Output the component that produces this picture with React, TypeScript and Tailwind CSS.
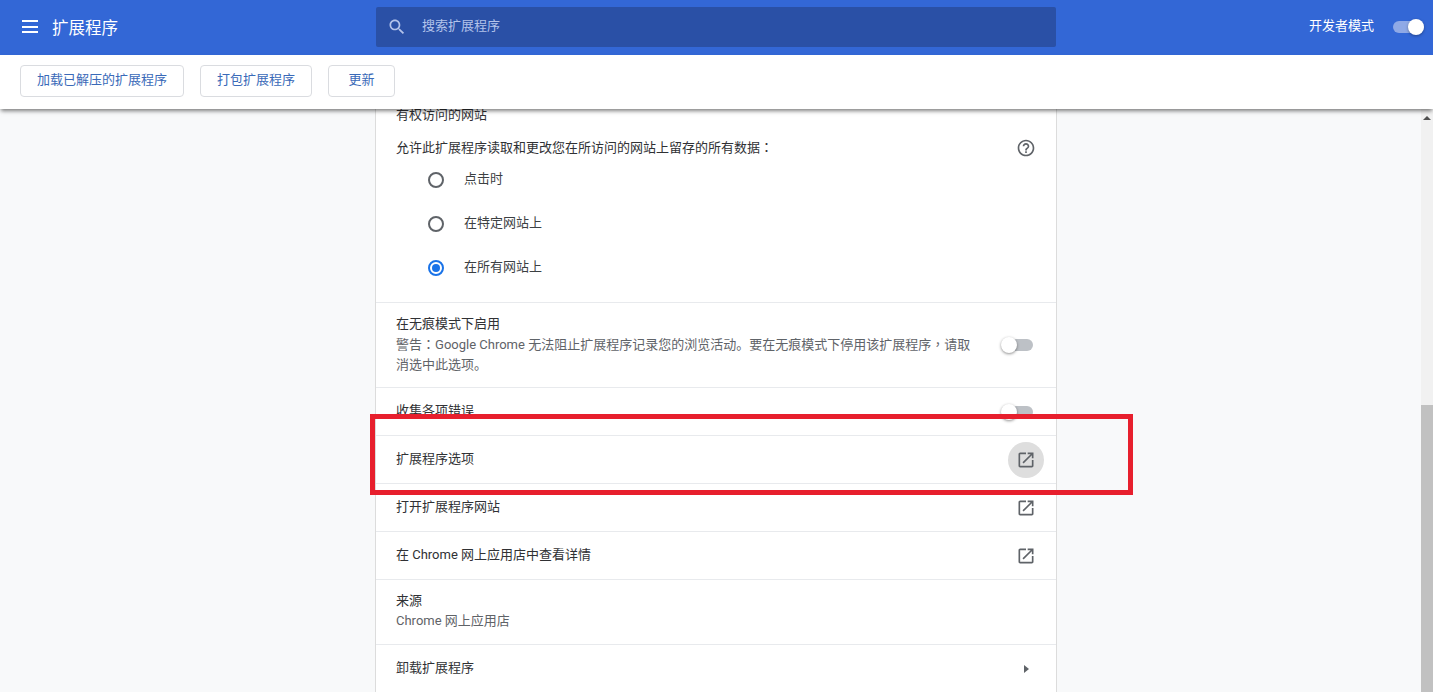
import React from 'react'

const OPEN_PATH = "M19 19H5V5h7V3H5c-1.11 0-2 .9-2 2v14c0 1.1.89 2 2 2h14c1.1 0 2-.9 2-2v-7h-2v7zM14 3v2h3.59l-9.83 9.83 1.41 1.41L19 6.41V10h2V3h-7z";
const HELP_PATH = "M11 18h2v-2h-2v2zm1-16C6.48 2 2 6.48 2 12s4.48 10 10 10 10-4.48 10-10S17.52 2 12 2zm0 18c-4.41 0-8-3.59-8-8s3.59-8 8-8 8 3.59 8 8-3.59 8-8 8zm0-14c-2.21 0-4 1.79-4 4h2c0-1.1.9-2 2-2s2 .9 2 2c0 2-3 1.75-3 5h2c0-2.25 3-2.5 3-5 0-2.21-1.79-4-4-4z";
const SEARCH_PATH = "M15.5 14h-.79l-.28-.27C15.41 12.59 16 11.11 16 9.5 16 5.91 13.09 3 9.5 3S3 5.91 3 9.5 5.91 16 9.5 16c1.61 0 3.09-.59 4.23-1.57l.27.28v.79l5 4.99L20.49 19l-4.99-5zm-6 0C7.01 14 5 11.99 5 9.5S7.01 5 9.5 5 14 7.01 14 9.5 11.99 14 9.5 14z";

const Icon: React.FC<{ d: string; size?: number; className?: string }> = ({ d, size = 20, className }) => (
  <svg width={size} height={size} viewBox="0 0 24 24" fill="currentColor" className={className}>
    <path d={d} />
  </svg>
);

// centred full-width punctuation, as the reference's system font draws it
const Punct: React.FC<{ children: string }> = ({ children }) => (
  <span style={{ fontFamily: '"Noto Sans CJK TC", sans-serif' }}>{children}</span>
);

const Toggle: React.FC = () => (
  <div className="relative w-[31px] h-[12px] rounded-full bg-[#bdc1c6]">
    <div className="absolute -left-[1px] -top-[2px] w-4 h-4 rounded-full bg-white shadow-[0_1px_3px_rgba(0,0,0,0.45)]" />
  </div>
);

const Radio: React.FC<{ label: string; checked?: boolean; className: string }> = ({ label, checked, className }) => (
  <div className={`${className} flex items-center pl-[52px]`}>
    <div className={`w-4 h-4 rounded-full border-2 flex items-center justify-center ${checked ? 'border-[#1a73e8]' : 'border-[#5f6368]'}`}>
      {checked && <div className="w-2 h-2 rounded-full bg-[#1a73e8]" />}
    </div>
    <span className="ml-5 pb-[2px] text-[#3c4043]">{label}</span>
  </div>
);

const LinkRow: React.FC<{ label: string; active?: boolean }> = ({ label, active }) => (
  <div className="h-[48px] flex items-center justify-between pl-5 pr-3 border-b border-[#e8eaed]">
    <span className="pb-[2px]">{label}</span>
    <div className={`w-9 h-9 rounded-full flex items-center justify-center text-[#5f6368] ${active ? 'bg-[#dedede]' : ''}`}>
      <Icon d={OPEN_PATH} />
    </div>
  </div>
);

export default function App() {
  return (
    <div
      className="relative h-screen overflow-hidden flex flex-col bg-[#f8f9fa] text-[13px] leading-5 text-[#303134]"
      style={{ fontFamily: 'Roboto, "Noto Sans CJK SC", sans-serif' }}
    >
      {/* header */}
      <div className="h-[55px] shrink-0 grid grid-cols-[376px_680px_1fr] bg-[#3367d6] text-white">
        <div className="flex items-center pl-[22px]">
          <div className="w-4 flex flex-col gap-[3.5px] mb-[2px]">
            <div className="h-[2px] bg-white" />
            <div className="h-[2px] bg-white" />
            <div className="h-[2px] bg-white" />
          </div>
          <span className="ml-[14px] text-[16.5px] mt-[2px]">扩展程序</span>
        </div>
        <div className="mt-[7px] h-[40px] rounded-[2px] bg-[#2a50a6] flex items-center pl-[11px] text-[#b3c3ea]">
          <Icon d={SEARCH_PATH} size={20} />
          <span className="ml-[15px] pb-[2px]">搜索扩展程序</span>
        </div>
        <div className="flex items-start justify-end pt-[16px] pr-[9px]">
          <span>开发者模式</span>
          <div className="relative ml-[19px] mt-[5px] w-[31px] h-[12px] rounded-full bg-[#8fa9e6]">
            <div className="absolute right-0 -top-[2px] w-4 h-4 rounded-full bg-white shadow-[0_1px_3px_rgba(0,0,0,0.35)]" />
          </div>
        </div>
      </div>

      {/* toolbar */}
      <div className="relative z-10 h-[54px] shrink-0 bg-white flex items-start gap-4 pt-[10px] pl-5 shadow-[0_3px_4px_-1px_rgba(0,0,0,0.5)] text-[#3a6ab8]">
        <button className="h-8 px-4 pb-[2px] rounded-[4px] border border-[#dadce0] bg-white">加载已解压的扩展程序</button>
        <button className="h-8 px-4 pb-[2px] rounded-[4px] border border-[#dadce0] bg-white">打包扩展程序</button>
        <button className="h-8 px-[19.5px] pb-[2px] rounded-[4px] border border-[#dadce0] bg-white">更新</button>
      </div>

      {/* body */}
      <div className="flex-1 min-h-0 grid grid-cols-[375px_682px_1fr]">
        <div />
        <div className="bg-white border-x border-[#dcdcdc] -mt-[4px] h-[700px]">
          <div className="border-b border-[#e8eaed] pb-3">
            <div className="pl-5">有权访问的网站</div>
            <div className="mt-3 h-5 pl-5 pr-3 flex items-start justify-between">
              <span>允许此扩展程序读取和更改您在所访问的网站上留存的所有数据<Punct>：</Punct></span>
              <div className="w-9 flex justify-center text-[#5f6368] pt-[1px]">
                <Icon d={HELP_PATH} />
              </div>
            </div>
            <div className="mt-[1px]">
              <Radio label="点击时" className="h-[44px]" />
              <Radio label="在特定网站上" className="h-[43px]" />
              <Radio label="在所有网站上" checked className="h-[45px]" />
            </div>
          </div>

          <div className="h-[85px] flex items-center justify-between pl-5 pr-[23px] border-b border-[#e8eaed]">
            <div className="whitespace-nowrap pb-[2px]">
              <div>在无痕模式下启用</div>
              <div className="text-[#5f6368]">
                警告<Punct>：</Punct>Google Chrome 无法阻止扩展程序记录您的浏览活动。要在无痕模式下停用该扩展程序<Punct>，</Punct>请取
                <br />
                消选中此选项。
              </div>
            </div>
            <Toggle />
          </div>

          <div className="h-[48px] flex items-center justify-between pl-5 pr-[23px] border-b border-[#e8eaed]">
            <span className="pb-[2px]">收集各项错误</span>
            <Toggle />
          </div>

          <LinkRow label="扩展程序选项" active />
          <LinkRow label="打开扩展程序网站" />
          <LinkRow label="在 Chrome 网上应用店中查看详情" />

          <div className="h-[65px] flex flex-col justify-center pl-5 pb-[2px] border-b border-[#e8eaed]">
            <div>来源</div>
            <div className="text-[#5f6368]">Chrome 网上应用店</div>
          </div>

          <div className="h-[48px] flex items-center justify-between pl-5 pr-3">
            <span className="pb-[2px]">卸载扩展程序</span>
            <div className="w-9 flex justify-center">
              <div className="w-0 h-0 border-y-[4px] border-y-transparent border-l-[5px] border-l-[#5f6368]" />
            </div>
          </div>
        </div>

        {/* scrollbar */}
        <div className="flex justify-end">
          <div className="w-3 h-full bg-[#f1f1f1] flex flex-col">
            <div className="h-[296px] flex justify-center pt-[7px]">
              <div className="w-0 h-0 border-x-[4px] border-x-transparent border-b-[4px] border-b-[#505050]" />
            </div>
            <div className="flex-1 bg-[#c1c1c1]" />
          </div>
        </div>
      </div>

      {/* red annotation box */}
      <div className="absolute z-20 left-[370px] top-[414px] w-[763px] h-[81px] border-[5px] border-[#e71f2d]" />
    </div>
  )
}
